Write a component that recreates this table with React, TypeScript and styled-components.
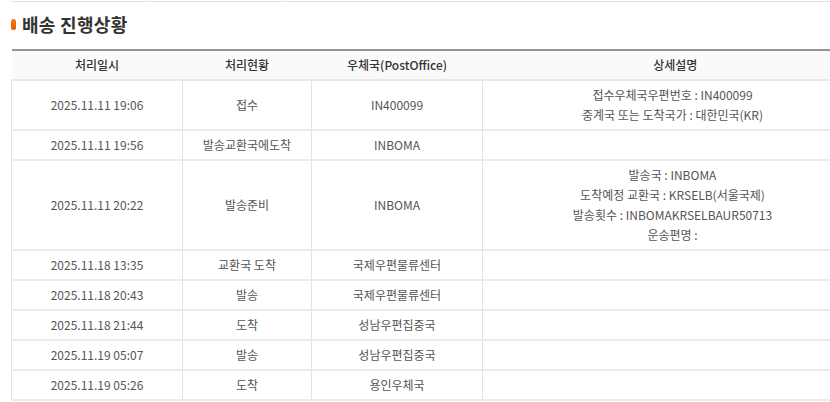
import React from 'react';
import styled, { createGlobalStyle } from 'styled-components';

interface Track {
  date: string;
  status: string;
  office: string;
  detail: string[];
}

const tracks: Track[] = [
  { date: '2025.11.11 19:06', status: '접수', office: 'IN400099', detail: ['접수우체국우편번호 : IN400099', '중계국 또는 도착국가 : 대한민국(KR)'] },
  { date: '2025.11.11 19:56', status: '발송교환국에도착', office: 'INBOMA', detail: [] },
  {
    date: '2025.11.11 20:22',
    status: '발송준비',
    office: 'INBOMA',
    detail: ['발송국 : INBOMA', '도착예정 교환국 : KRSELB(서울국제)', '발송횟수 : INBOMAKRSELBAUR50713', '운송편명 :'],
  },
  { date: '2025.11.18 13:35', status: '교환국 도착', office: '국제우편물류센터', detail: [] },
  { date: '2025.11.18 20:43', status: '발송', office: '국제우편물류센터', detail: [] },
  { date: '2025.11.18 21:44', status: '도착', office: '성남우편집중국', detail: [] },
  { date: '2025.11.19 05:07', status: '발송', office: '성남우편집중국', detail: [] },
  { date: '2025.11.19 05:26', status: '도착', office: '용인우체국', detail: [] },
];

const GlobalStyle = createGlobalStyle`
  html, body {
    margin: 0;
    padding: 0;
    background: #fff;
    overflow: hidden;
  }
  body {
    font-family: "Noto Sans CJK KR", "Noto Sans", sans-serif;
    color: #555;
  }
`;

const Page = styled.div`
  padding-left: 11px;
  width: 860px;
`;

const PrevStrip = styled.div`
  display: grid;
  grid-template-columns: 137px 137px 1fr;
  height: 1px;
  border-bottom: 1px solid #e2e2e2;
`;

const PrevCell = styled.div<{ $first?: boolean }>`
  border-left: ${(p) => (p.$first ? 'none' : '1px solid #e2e2e2')};
`;

const Title = styled.h2`
  display: flex;
  align-items: center;
  gap: 6px;
  margin: 12px 0 0;
  height: 20px;
  font-size: 18px;
  font-weight: 700;
  color: #333;
  letter-spacing: 0.3px;
`;

const Bullet = styled.span`
  width: 5px;
  height: 11px;
  border-radius: 3px;
  background: linear-gradient(#ff7a1a, #e05500);
`;

const Table = styled.table`
  margin-top: 15px;
  width: 851px;
  border-collapse: collapse;
  table-layout: fixed;
  border-top: 2px solid #959595;
  font-size: 12px;
  line-height: 20px;
`;

const Th = styled.th<{ $w?: number; $shift?: number }>`
  position: relative;
  width: ${(p) => (p.$w ? `${p.$w}px` : 'auto')};
  height: 28px;
  padding: 0 0 0 ${(p) => p.$shift ?? 0}px;
  background: #fafafa;
  border-bottom: 2px solid #e9e9e9;
  font-weight: 500;
  color: #333;
  text-align: center;

  & + &::before {
    content: '';
    position: absolute;
    left: 0;
    top: 0;
    width: 1px;
    height: 9px;
    background: #c4c4c4;
  }
`;

const Td = styled.td`
  padding: 4px 0;
  border-bottom: 2px solid #ebebeb;
  border-left: 1px solid #e3e3e3;
  text-align: center;
  vertical-align: middle;
  color: #555;
`;

const DetailLine = styled.div`
  white-space: nowrap;
`;

export default function App() {
  return (
    <Page>
      <GlobalStyle />
      <PrevStrip>
        <PrevCell $first />
        <PrevCell />
        <PrevCell />
      </PrevStrip>
      <Title>
        <Bullet />
        배송 진행상황
      </Title>
      <Table>
        <thead>
          <tr>
            <Th $w={171}>처리일시</Th>
            <Th $w={129}>처리현황</Th>
            <Th $w={171}>우체국(PostOffice)</Th>
            <Th $shift={6}>상세설명</Th>
          </tr>
        </thead>
        <tbody>
          {tracks.map((t, i) => (
            <tr key={i}>
              <Td>{t.date}</Td>
              <Td>{t.status}</Td>
              <Td>{t.office}</Td>
              <Td>
                {t.detail.length === 0 ? <DetailLine>&nbsp;</DetailLine> : t.detail.map((d, j) => <DetailLine key={j}>{d}</DetailLine>)}
              </Td>
            </tr>
          ))}
        </tbody>
      </Table>
    </Page>
  );
}
